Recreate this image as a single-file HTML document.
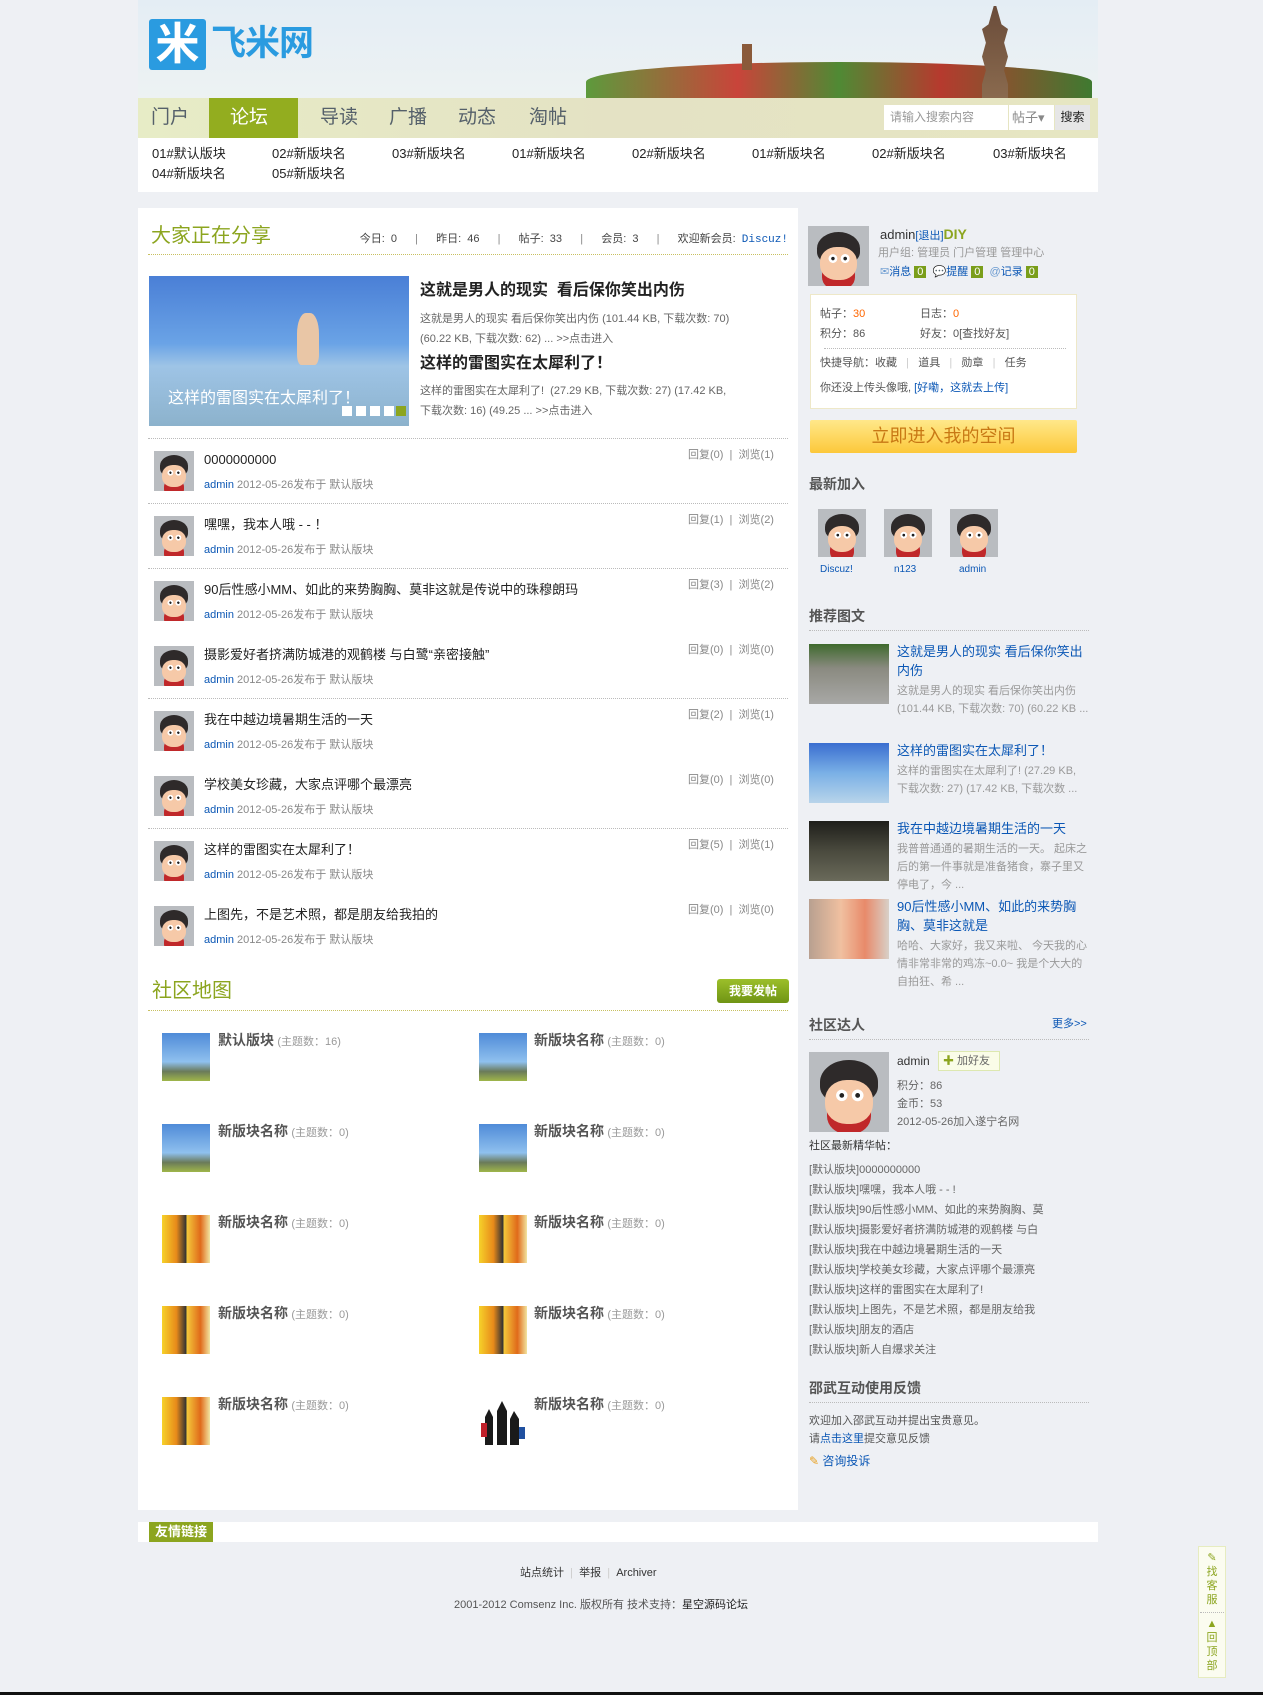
<!DOCTYPE html>
<html><head><meta charset="utf-8">
<style>
*{margin:0;padding:0;box-sizing:border-box}
body{width:1263px;height:1695px;position:relative;overflow:hidden;background:#eef0f4;font-family:"Liberation Sans","Noto Sans CJK SC",sans-serif;font-size:12px;color:#333}
.a{position:absolute;white-space:nowrap}
.av{position:absolute;background:#b9bcc0;overflow:hidden}
.av:before{content:"";position:absolute;left:14%;top:10%;width:72%;height:55%;border-radius:50% 50% 40% 40%;background:#2e2a2a}
.av:after{content:"";position:absolute;left:20%;top:35%;width:60%;height:55%;border-radius:45%;background:radial-gradient(circle at 35% 35%,#222 0 5%,#fff 6% 13%,transparent 14%),radial-gradient(circle at 68% 35%,#222 0 5%,#fff 6% 13%,transparent 14%),#f6c9a8;box-shadow:0 12px 0 -2px #c0282a}
.blue{color:#0b57b5}
.gray{color:#888}
.dl{position:absolute;border-top:1px dotted #bbb}
.sky{background:linear-gradient(#4f8bd8,#8fc0ee 60%,#6a7a5a 80%,#9fb64a)}
.flw{background:linear-gradient(90deg,#f6d22a,#e88a1a 30%,#333 50%,#f4c83a 52%,#e06a1a 80%,#f2e4a0)}
</style></head><body>

<!-- header -->
<div class="a" style="left:138px;top:0;width:960px;height:98px;background:linear-gradient(#e4edf4,#edf2f3)"></div>
<div class="a" style="left:586px;top:62px;width:506px;height:40px;border-radius:60% 60% 0 0;background:linear-gradient(90deg,#5d9a3c,#c9443a 30%,#4f8a34 50%,#b63a2e 70%,#3f7a30)"></div>
<div class="a" style="left:742px;top:44px;width:10px;height:26px;background:#8a5a3a"></div>
<div class="a" style="left:982px;top:6px;width:26px;height:92px;background:linear-gradient(#6a4c3a,#8a6a4e);clip-path:polygon(45% 0,55% 0,75% 20%,100% 25%,85% 40%,100% 55%,85% 70%,100% 85%,100% 100%,0 100%,0 85%,15% 70%,0 55%,15% 40%,0 25%,25% 20%)"></div>
<div class="a" style="left:149px;top:19px;width:57px;height:51px;background:#2a9be0;border-radius:3px;color:#fff;font-size:44px;font-weight:bold;line-height:51px;text-align:center">米</div>
<div class="a" style="left:211px;top:22px;font-size:35px;font-weight:bold;color:#2a9be0;line-height:44px;letter-spacing:-1px">飞米网</div>

<!-- nav -->
<div class="a" style="left:138px;top:98px;width:960px;height:40px;background:linear-gradient(90deg,#e7ecc6,#e4e2c4 50%,#e6e6c2)"></div>
<div class="a" style="left:209px;top:98px;width:89px;height:40px;background:#93ad1f"></div>
<div class="a" style="left:151px;top:104px;font-size:19px;color:#55606a;line-height:28px">门户</div>
<div class="a" style="left:230px;top:104px;font-size:19px;color:#fff;line-height:28px">论坛</div>
<div class="a" style="left:320px;top:104px;font-size:19px;color:#55606a;line-height:28px">导读</div>
<div class="a" style="left:389px;top:104px;font-size:19px;color:#55606a;line-height:28px">广播</div>
<div class="a" style="left:458px;top:104px;font-size:19px;color:#55606a;line-height:28px">动态</div>
<div class="a" style="left:529px;top:104px;font-size:19px;color:#55606a;line-height:28px">淘帖</div>
<div class="a" style="left:884px;top:105px;width:124px;height:25px;background:#fff;color:#999;padding-left:6px;line-height:25px">请输入搜索内容</div>
<div class="a" style="left:1009px;top:105px;width:45px;height:25px;background:#fff;color:#888;font-size:13px;line-height:25px;padding-left:3px">帖子▾</div>
<div class="a" style="left:1055px;top:105px;width:35px;height:25px;background:#e6e6e6;color:#222;line-height:25px;text-align:center">搜索</div>

<!-- subnav -->
<div class="a" style="left:138px;top:138px;width:960px;height:54px;background:#fff"></div>
<div class="a" style="left:152px;top:144px;font-size:13px;line-height:20px;color:#222">01#默认版块<br>04#新版块名</div>
<div class="a" style="left:272px;top:144px;font-size:13px;line-height:20px;color:#222">02#新版块名<br>05#新版块名</div>
<div class="a" style="left:392px;top:144px;font-size:13px;line-height:20px;color:#222">03#新版块名</div>
<div class="a" style="left:512px;top:144px;font-size:13px;line-height:20px;color:#222">01#新版块名</div>
<div class="a" style="left:632px;top:144px;font-size:13px;line-height:20px;color:#222">02#新版块名</div>
<div class="a" style="left:752px;top:144px;font-size:13px;line-height:20px;color:#222">01#新版块名</div>
<div class="a" style="left:872px;top:144px;font-size:13px;line-height:20px;color:#222">02#新版块名</div>
<div class="a" style="left:993px;top:144px;font-size:13px;line-height:20px;color:#222">03#新版块名</div>

<!-- main left -->
<div class="a" style="left:138px;top:208px;width:660px;height:1302px;background:#fff"></div>
<div class="a" style="left:151px;top:223px;font-size:20px;color:#8ca51f;line-height:26px">大家正在分享</div>
<div class="a" style="right:475px;top:231px;font-size:11px;color:#444;line-height:16px;word-spacing:3px">今日: 0 &nbsp;&nbsp;<span class="gray">|</span>&nbsp;&nbsp; 昨日: 46 &nbsp;&nbsp;<span class="gray">|</span>&nbsp;&nbsp; 帖子: 33 &nbsp;&nbsp;<span class="gray">|</span>&nbsp;&nbsp; 会员: 3 &nbsp;&nbsp;<span class="gray">|</span>&nbsp;&nbsp; 欢迎新会员: <span class="blue" style="font-family:'Liberation Mono',monospace">Discuz!</span></div>
<div class="a" style="left:148px;top:254px;width:640px;border-top:1px dotted #c8c060"></div>
<div class="a sky" style="left:149px;top:276px;width:260px;height:150px;background:linear-gradient(#4a7fd6,#6aa3e6 45%,#9ec4e6 60%,#8cb2cc)"></div>
<div class="a" style="left:297px;top:313px;width:22px;height:52px;background:#e9c6a6;border-radius:40% 40% 20% 20%"></div>
<div class="a" style="left:168px;top:388px;font-size:16px;color:#fff;line-height:22px">这样的雷图实在太犀利了！</div>
<div class="a" style="left:342px;top:406px;width:10px;height:10px;background:#fff;box-shadow:14px 0 #fff,28px 0 #fff,42px 0 #fff"></div>
<div class="a" style="left:396px;top:406px;width:10px;height:10px;background:#8ca51f"></div>
<div class="a" style="left:420px;top:280px;font-size:16px;font-weight:bold;color:#222;line-height:22px">这就是男人的现实&nbsp; 看后保你笑出内伤</div>
<div class="a" style="left:420px;top:309px;font-size:11px;color:#666;line-height:20px">这就是男人的现实 看后保你笑出内伤 (101.44 KB, 下载次数: 70)<br>(60.22 KB, 下载次数: 62) ... &gt;&gt;点击进入</div>
<div class="a" style="left:420px;top:353px;font-size:16px;font-weight:bold;color:#222;line-height:22px">这样的雷图实在太犀利了！</div>
<div class="a" style="left:420px;top:381px;font-size:11px;color:#666;line-height:20px">这样的雷图实在太犀利了! &nbsp;(27.29 KB, 下载次数: 27) (17.42 KB,<br>下载次数: 16) (49.25 ... &gt;&gt;点击进入</div>

<div class="dl" style="left:148px;top:438px;width:640px"></div>
<div class="av" style="left:154px;top:451px;width:40px;height:40px"></div>
<div class="a" style="left:204px;top:451px;font-size:13px;color:#222;line-height:18px">0000000000</div>
<div class="a" style="left:204px;top:477px;font-size:11px;color:#888;line-height:16px"><span class="blue">admin</span> 2012-05-26发布于 默认版块</div>
<div class="a" style="left:688px;top:447px;font-size:11px;color:#888;line-height:16px">回复(0) &nbsp;|&nbsp; 浏览(1)</div>

<div class="dl" style="left:148px;top:503px;width:640px"></div>
<div class="av" style="left:154px;top:516px;width:40px;height:40px"></div>
<div class="a" style="left:204px;top:516px;font-size:13px;color:#222;line-height:18px">嘿嘿，我本人哦 - - ！</div>
<div class="a" style="left:204px;top:542px;font-size:11px;color:#888;line-height:16px"><span class="blue">admin</span> 2012-05-26发布于 默认版块</div>
<div class="a" style="left:688px;top:512px;font-size:11px;color:#888;line-height:16px">回复(1) &nbsp;|&nbsp; 浏览(2)</div>

<div class="dl" style="left:148px;top:568px;width:640px"></div>
<div class="av" style="left:154px;top:581px;width:40px;height:40px"></div>
<div class="a" style="left:204px;top:581px;font-size:13px;color:#222;line-height:18px">90后性感小MM、如此的来势胸胸、莫非这就是传说中的珠穆朗玛</div>
<div class="a" style="left:204px;top:607px;font-size:11px;color:#888;line-height:16px"><span class="blue">admin</span> 2012-05-26发布于 默认版块</div>
<div class="a" style="left:688px;top:577px;font-size:11px;color:#888;line-height:16px">回复(3) &nbsp;|&nbsp; 浏览(2)</div>

<div class="av" style="left:154px;top:646px;width:40px;height:40px"></div>
<div class="a" style="left:204px;top:646px;font-size:13px;color:#222;line-height:18px">摄影爱好者挤满防城港的观鹤楼 与白鹭“亲密接触”</div>
<div class="a" style="left:204px;top:672px;font-size:11px;color:#888;line-height:16px"><span class="blue">admin</span> 2012-05-26发布于 默认版块</div>
<div class="a" style="left:688px;top:642px;font-size:11px;color:#888;line-height:16px">回复(0) &nbsp;|&nbsp; 浏览(0)</div>

<div class="dl" style="left:148px;top:698px;width:640px"></div>
<div class="av" style="left:154px;top:711px;width:40px;height:40px"></div>
<div class="a" style="left:204px;top:711px;font-size:13px;color:#222;line-height:18px">我在中越边境暑期生活的一天</div>
<div class="a" style="left:204px;top:737px;font-size:11px;color:#888;line-height:16px"><span class="blue">admin</span> 2012-05-26发布于 默认版块</div>
<div class="a" style="left:688px;top:707px;font-size:11px;color:#888;line-height:16px">回复(2) &nbsp;|&nbsp; 浏览(1)</div>

<div class="av" style="left:154px;top:776px;width:40px;height:40px"></div>
<div class="a" style="left:204px;top:776px;font-size:13px;color:#222;line-height:18px">学校美女珍藏，大家点评哪个最漂亮</div>
<div class="a" style="left:204px;top:802px;font-size:11px;color:#888;line-height:16px"><span class="blue">admin</span> 2012-05-26发布于 默认版块</div>
<div class="a" style="left:688px;top:772px;font-size:11px;color:#888;line-height:16px">回复(0) &nbsp;|&nbsp; 浏览(0)</div>

<div class="dl" style="left:148px;top:828px;width:640px"></div>
<div class="av" style="left:154px;top:841px;width:40px;height:40px"></div>
<div class="a" style="left:204px;top:841px;font-size:13px;color:#222;line-height:18px">这样的雷图实在太犀利了！</div>
<div class="a" style="left:204px;top:867px;font-size:11px;color:#888;line-height:16px"><span class="blue">admin</span> 2012-05-26发布于 默认版块</div>
<div class="a" style="left:688px;top:837px;font-size:11px;color:#888;line-height:16px">回复(5) &nbsp;|&nbsp; 浏览(1)</div>

<div class="av" style="left:154px;top:906px;width:40px;height:40px"></div>
<div class="a" style="left:204px;top:906px;font-size:13px;color:#222;line-height:18px">上图先，不是艺术照，都是朋友给我拍的</div>
<div class="a" style="left:204px;top:932px;font-size:11px;color:#888;line-height:16px"><span class="blue">admin</span> 2012-05-26发布于 默认版块</div>
<div class="a" style="left:688px;top:902px;font-size:11px;color:#888;line-height:16px">回复(0) &nbsp;|&nbsp; 浏览(0)</div>

<!-- forum map -->
<div class="a" style="left:152px;top:978px;font-size:20px;color:#8ca51f;line-height:26px">社区地图</div>
<div class="a" style="left:717px;top:979px;width:72px;height:24px;border-radius:3px;background:linear-gradient(#9cbf2a,#6f9414);color:#fff;font-weight:bold;font-size:12px;text-align:center;line-height:24px">我要发帖</div>
<div class="a" style="left:148px;top:1010px;width:640px;border-top:1px dotted #c8c060"></div>

<div class="a sky" style="left:162px;top:1033px;width:48px;height:48px"></div>
<div class="a" style="left:218px;top:1031px;line-height:18px"><b style="font-size:14px;color:#555">默认版块</b> <span style="font-size:11px;color:#999">(主题数：16)</span></div>
<div class="a sky" style="left:479px;top:1033px;width:48px;height:48px"></div>
<div class="a" style="left:534px;top:1031px;line-height:18px"><b style="font-size:14px;color:#555">新版块名称</b> <span style="font-size:11px;color:#999">(主题数：0)</span></div>

<div class="a sky" style="left:162px;top:1124px;width:48px;height:48px"></div>
<div class="a" style="left:218px;top:1122px;line-height:18px"><b style="font-size:14px;color:#555">新版块名称</b> <span style="font-size:11px;color:#999">(主题数：0)</span></div>
<div class="a sky" style="left:479px;top:1124px;width:48px;height:48px"></div>
<div class="a" style="left:534px;top:1122px;line-height:18px"><b style="font-size:14px;color:#555">新版块名称</b> <span style="font-size:11px;color:#999">(主题数：0)</span></div>

<div class="a flw" style="left:162px;top:1215px;width:48px;height:48px"></div>
<div class="a" style="left:218px;top:1213px;line-height:18px"><b style="font-size:14px;color:#555">新版块名称</b> <span style="font-size:11px;color:#999">(主题数：0)</span></div>
<div class="a flw" style="left:479px;top:1215px;width:48px;height:48px"></div>
<div class="a" style="left:534px;top:1213px;line-height:18px"><b style="font-size:14px;color:#555">新版块名称</b> <span style="font-size:11px;color:#999">(主题数：0)</span></div>

<div class="a flw" style="left:162px;top:1306px;width:48px;height:48px"></div>
<div class="a" style="left:218px;top:1304px;line-height:18px"><b style="font-size:14px;color:#555">新版块名称</b> <span style="font-size:11px;color:#999">(主题数：0)</span></div>
<div class="a flw" style="left:479px;top:1306px;width:48px;height:48px"></div>
<div class="a" style="left:534px;top:1304px;line-height:18px"><b style="font-size:14px;color:#555">新版块名称</b> <span style="font-size:11px;color:#999">(主题数：0)</span></div>

<div class="a flw" style="left:162px;top:1397px;width:48px;height:48px"></div>
<div class="a" style="left:218px;top:1395px;line-height:18px"><b style="font-size:14px;color:#555">新版块名称</b> <span style="font-size:11px;color:#999">(主题数：0)</span></div>
<svg class="a" style="left:479px;top:1397px" width="48" height="48"><rect width="48" height="48" fill="#fff"/><path d="M6 48V20l4-8 4 8v28zM18 48V14l5-10 5 10v34zM31 48V22l4-8 5 8v26z" fill="#1a1a1a"/><rect x="2" y="26" width="6" height="14" fill="#c0202a"/><rect x="40" y="30" width="6" height="12" fill="#2050a0"/></svg>
<div class="a" style="left:534px;top:1395px;line-height:18px"><b style="font-size:14px;color:#555">新版块名称</b> <span style="font-size:11px;color:#999">(主题数：0)</span></div>

<!-- sidebar -->
<div class="av" style="left:808px;top:226px;width:61px;height:60px"></div>
<div class="a" style="left:880px;top:225px;font-size:13px;line-height:18px;color:#333">admin<span class="blue" style="font-size:11px">[退出]</span><b style="color:#8ca51f;font-size:14px">DIY</b></div>
<div class="a" style="left:878px;top:245px;font-size:11px;color:#999;line-height:16px">用户组: 管理员 门户管理 管理中心</div>
<div class="a" style="left:880px;top:264px;font-size:11px;line-height:16px"><span style="color:#6a9ad0">✉</span><span class="blue">消息</span> <span style="background:#7a9e1a;color:#fff;padding:0 3px">0</span> &nbsp;<span style="color:#6a9ad0">💬</span><span class="blue">提醒</span> <span style="background:#7a9e1a;color:#fff;padding:0 3px">0</span> &nbsp;<span style="color:#6a9ad0">@</span><span class="blue">记录</span> <span style="background:#7a9e1a;color:#fff;padding:0 3px">0</span></div>

<div class="a" style="left:810px;top:294px;width:267px;height:115px;background:#fff;border:1px solid #eee8c8"></div>
<div class="a" style="left:820px;top:306px;font-size:11px;color:#555;line-height:16px">帖子：<span style="color:#f60">30</span></div>
<div class="a" style="left:920px;top:306px;font-size:11px;color:#555;line-height:16px">日志：<span style="color:#f60">0</span></div>
<div class="a" style="left:820px;top:326px;font-size:11px;color:#555;line-height:16px">积分：86</div>
<div class="a" style="left:920px;top:326px;font-size:11px;color:#555;line-height:16px">好友：0[查找好友]</div>
<div class="dl" style="left:824px;top:348px;width:242px"></div>
<div class="a" style="left:820px;top:355px;font-size:11px;color:#555;line-height:16px">快捷导航：收藏 &nbsp;&nbsp;<span style="color:#ccc">|</span>&nbsp;&nbsp; 道具 &nbsp;&nbsp;<span style="color:#ccc">|</span>&nbsp;&nbsp; 勋章 &nbsp;&nbsp;<span style="color:#ccc">|</span>&nbsp;&nbsp; 任务</div>
<div class="a" style="left:820px;top:380px;font-size:11px;color:#555;line-height:16px">你还没上传头像哦, <span class="blue">[好嘞，这就去上传]</span></div>
<div class="a" style="left:810px;top:420px;width:267px;height:33px;background:linear-gradient(#ffe88a,#fcc83a);border-radius:2px;color:#c87814;font-size:18px;line-height:33px;text-align:center">立即进入我的空间</div>

<div class="a" style="left:809px;top:474px;font-size:14px;font-weight:bold;color:#555;line-height:20px">最新加入</div>
<div class="av" style="left:818px;top:509px;width:48px;height:48px"></div>
<div class="av" style="left:884px;top:509px;width:48px;height:48px"></div>
<div class="av" style="left:950px;top:509px;width:48px;height:48px"></div>
<div class="a blue" style="left:820px;top:563px;font-size:10px;line-height:14px">Discuz!</div>
<div class="a blue" style="left:894px;top:563px;font-size:10px;line-height:14px">n123</div>
<div class="a blue" style="left:959px;top:563px;font-size:10px;line-height:14px">admin</div>

<div class="a" style="left:809px;top:606px;font-size:14px;font-weight:bold;color:#555;line-height:20px">推荐图文</div>
<div class="dl" style="left:809px;top:630px;width:280px"></div>
<div class="a" style="left:809px;top:644px;width:80px;height:60px;background:linear-gradient(#3f6a2e,#8a8a80 40%,#a8a8a6)"></div>
<div class="a blue" style="left:897px;top:642px;font-size:13px;line-height:19px;white-space:normal;width:192px">这就是男人的现实 看后保你笑出内伤</div>
<div class="a" style="left:897px;top:682px;font-size:11px;line-height:18px;color:#999;white-space:normal;width:192px">这就是男人的现实 看后保你笑出内伤 (101.44 KB, 下载次数: 70) (60.22 KB ...</div>
<div class="a" style="left:809px;top:743px;width:80px;height:60px;background:linear-gradient(#3a6ed0,#7ab0e6 50%,#b8d4ea)"></div>
<div class="a blue" style="left:897px;top:741px;font-size:13px;line-height:19px">这样的雷图实在太犀利了！</div>
<div class="a" style="left:897px;top:762px;font-size:11px;line-height:18px;color:#999;white-space:normal;width:192px">这样的雷图实在太犀利了! (27.29 KB, 下载次数: 27) (17.42 KB, 下载次数 ...</div>
<div class="a" style="left:809px;top:821px;width:80px;height:60px;background:linear-gradient(#1e1e1a,#4a4a3e 50%,#6a6a5a)"></div>
<div class="a blue" style="left:897px;top:819px;font-size:13px;line-height:19px">我在中越边境暑期生活的一天</div>
<div class="a" style="left:897px;top:840px;font-size:11px;line-height:18px;color:#999;white-space:normal;width:192px">我普普通通的暑期生活的一天。 起床之后的第一件事就是准备猪食，寨子里又停电了，今 ...</div>
<div class="a" style="left:809px;top:899px;width:80px;height:60px;background:linear-gradient(90deg,#b8a090,#f0c0a0 40%,#e88a6a 70%,#d8d0c8)"></div>
<div class="a blue" style="left:897px;top:897px;font-size:13px;line-height:19px;white-space:normal;width:192px">90后性感小MM、如此的来势胸胸、莫非这就是</div>
<div class="a" style="left:897px;top:937px;font-size:11px;line-height:18px;color:#999;white-space:normal;width:192px">哈哈、大家好，我又来啦、 今天我的心情非常非常的鸡冻~0.0~ 我是个大大的自拍狂、希 ...</div>

<div class="a" style="left:809px;top:1015px;font-size:14px;font-weight:bold;color:#555;line-height:20px">社区达人</div>
<div class="a blue" style="left:1052px;top:1016px;font-size:11px;line-height:16px">更多&gt;&gt;</div>
<div class="dl" style="left:809px;top:1039px;width:280px"></div>
<div class="av" style="left:809px;top:1052px;width:80px;height:80px"></div>
<div class="a" style="left:897px;top:1053px;font-size:12px;line-height:16px;color:#333">admin</div>
<div class="a" style="left:938px;top:1051px;width:62px;height:20px;border:1px solid #dde8b0;background:#fafce8;font-size:11px;color:#666;line-height:18px;padding-left:4px"><span style="color:#8ca51f">✚</span> 加好友</div>
<div class="a" style="left:897px;top:1077px;font-size:11px;color:#666;line-height:18px">积分：86<br>金币：53<br>2012-05-26加入遂宁名网</div>
<div class="a" style="left:809px;top:1138px;font-size:11px;color:#333;line-height:16px">社区最新精华帖：</div>
<div class="a" style="left:809px;top:1160px;font-size:11px;color:#666;line-height:20px">[默认版块]0000000000<br>[默认版块]嘿嘿，我本人哦 - - !<br>[默认版块]90后性感小MM、如此的来势胸胸、莫<br>[默认版块]摄影爱好者挤满防城港的观鹤楼 与白<br>[默认版块]我在中越边境暑期生活的一天<br>[默认版块]学校美女珍藏，大家点评哪个最漂亮<br>[默认版块]这样的雷图实在太犀利了!<br>[默认版块]上图先，不是艺术照，都是朋友给我<br>[默认版块]朋友的酒店<br>[默认版块]新人自爆求关注</div>

<div class="a" style="left:809px;top:1378px;font-size:14px;font-weight:bold;color:#555;line-height:20px">邵武互动使用反馈</div>
<div class="dl" style="left:809px;top:1402px;width:280px"></div>
<div class="a" style="left:809px;top:1412px;font-size:11px;color:#555;line-height:18px">欢迎加入邵武互动并提出宝贵意见。<br>请<span class="blue">点击这里</span>提交意见反馈</div>
<div class="a" style="left:809px;top:1452px;font-size:12px;line-height:18px"><span style="color:#e8a020">✎</span> <span class="blue">咨询投诉</span></div>

<!-- friend links -->
<div class="a" style="left:138px;top:1522px;width:960px;height:20px;background:#fff"></div>
<div class="a" style="left:149px;top:1522px;width:64px;height:20px;background:#8ca51f;color:#fff;font-weight:bold;font-size:13px;line-height:20px;text-align:center">友情链接</div>

<!-- footer -->
<div class="a" style="left:520px;top:1565px;font-size:11px;color:#333;line-height:16px">站点统计 &nbsp;<span style="color:#ccc">|</span>&nbsp; 举报 &nbsp;<span style="color:#ccc">|</span>&nbsp; Archiver</div>
<div class="a" style="left:454px;top:1597px;font-size:11px;color:#555;line-height:16px">2001-2012 Comsenz Inc. 版权所有 技术支持：<span style="color:#222">星空源码论坛</span></div>

<div class="a" style="left:1198px;top:1546px;width:28px;height:132px;background:#fbfcf0;border:1px solid #e6ecc0"></div>
<div class="a" style="left:1205px;top:1551px;font-size:11px;color:#8ca51f;line-height:14px;white-space:normal;width:14px;text-align:center">✎找客服</div>
<div class="dl" style="left:1200px;top:1612px;width:24px"></div>
<div class="a" style="left:1205px;top:1617px;font-size:11px;color:#8ca51f;line-height:14px;white-space:normal;width:14px;text-align:center">▲回顶部</div>

<div class="a" style="left:0;top:1692px;width:1263px;height:3px;background:#111"></div>
</body></html>
